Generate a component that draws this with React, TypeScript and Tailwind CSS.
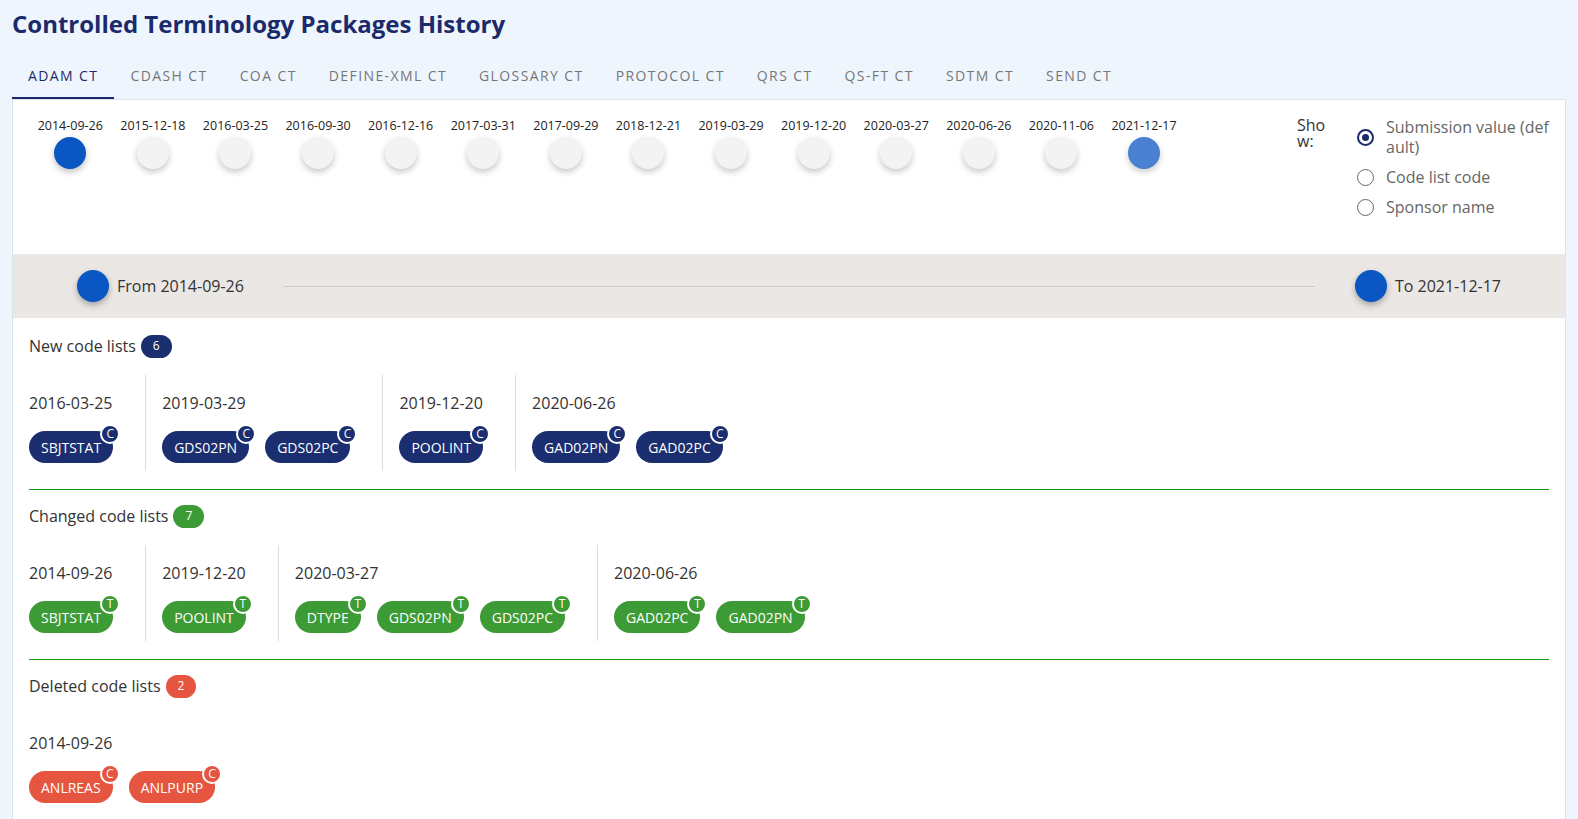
import React from "react";

const timeline = [
  "2014-09-26","2015-12-18","2016-03-25","2016-09-30","2016-12-16","2017-03-31","2017-09-29",
  "2018-12-21","2019-03-29","2019-12-20","2020-03-27","2020-06-26","2020-11-06","2021-12-17",
];

const tabs = ["ADAM CT","CDASH CT","COA CT","DEFINE-XML CT","GLOSSARY CT","PROTOCOL CT","QRS CT","QS-FT CT","SDTM CT","SEND CT"];

type Group = { date: string; items: string[] };
type Section = { title: string; count: number; badge: string; bg: string; groups: Group[]; first?: boolean; last?: boolean };

const sections: Section[] = [
  {
    title: "New code lists", count: 6, badge: "C", bg: "bg-[#1b2e6f]", first: true,
    groups: [
      { date: "2016-03-25", items: ["SBJTSTAT"] },
      { date: "2019-03-29", items: ["GDS02PN", "GDS02PC"] },
      { date: "2019-12-20", items: ["POOLINT"] },
      { date: "2020-06-26", items: ["GAD02PN", "GAD02PC"] },
    ],
  },
  {
    title: "Changed code lists", count: 7, badge: "T", bg: "bg-[#3d9b35]",
    groups: [
      { date: "2014-09-26", items: ["SBJTSTAT"] },
      { date: "2019-12-20", items: ["POOLINT"] },
      { date: "2020-03-27", items: ["DTYPE", "GDS02PN", "GDS02PC"] },
      { date: "2020-06-26", items: ["GAD02PC", "GAD02PN"] },
    ],
  },
  {
    title: "Deleted code lists", count: 2, badge: "C", bg: "bg-[#e5553f]", last: true,
    groups: [{ date: "2014-09-26", items: ["ANLREAS", "ANLPURP"] }],
  },
];

function Chip({ label, badge, bg }: { label: string; badge: string; bg: string }) {
  return (
    <div className="relative mr-4">
      <div className={`h-8 px-3 rounded-full flex items-center text-[14px] text-white ${bg}`}>{label}</div>
      <div
        className={`absolute -top-[7px] -right-[7px] w-5 h-5 rounded-full border-2 border-white flex items-center justify-center text-[12px] leading-none text-white ${bg}`}
      >
        {badge}
      </div>
    </div>
  );
}

export default function App() {
  return (
    <div className="h-screen overflow-hidden bg-[#eff5fd] px-3 font-['Open_Sans','Liberation_Sans',sans-serif]">
      <h1 className="pt-2 text-[24px] leading-8 font-bold text-[#1b2a6b]">Controlled Terminology Packages History</h1>

      <div className="mt-[11px] flex h-12">
        {tabs.map((t, i) => (
          <div
            key={t}
            className={
              i === 0
                ? "px-4 pt-[2px] flex items-center border-b-2 border-[#1b2a6b] text-[14px] tracking-[1.4px] text-[#1b2a6b]"
                : "px-4 pt-[2px] flex items-center border-b-2 border-transparent text-[14px] tracking-[1.4px] text-[#777]"
            }
          >
            {t}
          </div>
        ))}
      </div>

      <div className="bg-white border border-[#dde3ea]">
        <div className="flex px-4 h-[154px]">
          <div className="flex pt-[18px]">
            {timeline.map((d, i) => (
              <div key={d} className="w-[82.6px] flex flex-col items-center">
                <div className="text-[12.5px] leading-4 text-[#222]">{d}</div>
                <div
                  className={
                    i === 0
                      ? "mt-[3px] w-8 h-8 rounded-full bg-[#0a56c2] shadow-[0_3px_6px_rgba(0,0,0,0.25)]"
                      : i === timeline.length - 1
                      ? "mt-[3px] w-8 h-8 rounded-full bg-[#4a80d1] shadow-[0_3px_6px_rgba(0,0,0,0.2)]"
                      : "mt-[3px] w-8 h-8 rounded-full bg-[#f3f3f3] shadow-[0_3px_6px_rgba(0,0,0,0.22)]"
                  }
                />
              </div>
            ))}
          </div>

          <div className="ml-auto flex pt-[17px]">
            <div className="w-[32px] break-all text-[16px] leading-4 text-[#333]">Show:</div>
            <div className="ml-[28px] flex flex-col gap-[10px]">
              {["Submission value (default)", "Code list code", "Sponsor name"].map((o, i) => (
                <div key={o} className="flex items-center gap-3">
                  <div
                    className={
                      i === 0
                        ? "w-[17px] h-[17px] rounded-full border-2 border-[#1b2a6b] flex items-center justify-center shrink-0"
                        : "w-[17px] h-[17px] rounded-full border-[1.5px] border-[#666] shrink-0"
                    }
                  >
                    {i === 0 && <div className="w-[7px] h-[7px] rounded-full bg-[#1b2a6b]" />}
                  </div>
                  <div className="w-[163px] break-all text-[16px] leading-5 text-[#666]">{o}</div>
                </div>
              ))}
            </div>
          </div>
        </div>

        <div className="h-16 bg-[#eae7e4] flex items-center px-16">
          <div className="w-8 h-8 rounded-full bg-[#0a56c2] shadow-[0_3px_6px_rgba(0,0,0,0.3)] shrink-0" />
          <div className="ml-2 text-[16px] text-[#333]">From 2014-09-26</div>
          <div className="flex-1 h-px bg-[#cbcbcb] mx-10" />
          <div className="w-8 h-8 rounded-full bg-[#0a56c2] shadow-[0_3px_6px_rgba(0,0,0,0.3)] shrink-0" />
          <div className="ml-2 text-[16px] text-[#333]">To 2021-12-17</div>
        </div>

        <div className="px-4">
          {sections.map((s) => (
            <div key={s.title}>
              <div className={s.first ? "pt-4 pb-[18px]" : "pt-[14px] pb-[18px]"}>
                <div className="h-6 flex items-center text-[16px] text-[#333]">
                  {s.title}
                  <span
                    className={`ml-[5px] h-[23px] px-3 rounded-full flex items-center text-[12px] text-white ${s.bg}`}
                  >
                    {s.count}
                  </span>
                </div>
                <div className="mt-[17px] flex">
                  {s.groups.map((g, gi) => (
                    <div
                      key={g.date + gi}
                      className={gi === 0 ? "pt-4 pb-2 pr-4" : "pt-4 pb-2 pr-4 pl-4 border-l border-[#dddddd]"}
                    >
                      <div className="text-[16px] leading-6 text-[#333]">{g.date}</div>
                      <div className="mt-4 flex">
                        {g.items.map((it) => (
                          <Chip key={it} label={it} badge={s.badge} bg={s.bg} />
                        ))}
                      </div>
                    </div>
                  ))}
                </div>
              </div>
              {!s.last && <div className="h-px bg-[#139813]" />}
            </div>
          ))}
        </div>
      </div>
    </div>
  );
}
